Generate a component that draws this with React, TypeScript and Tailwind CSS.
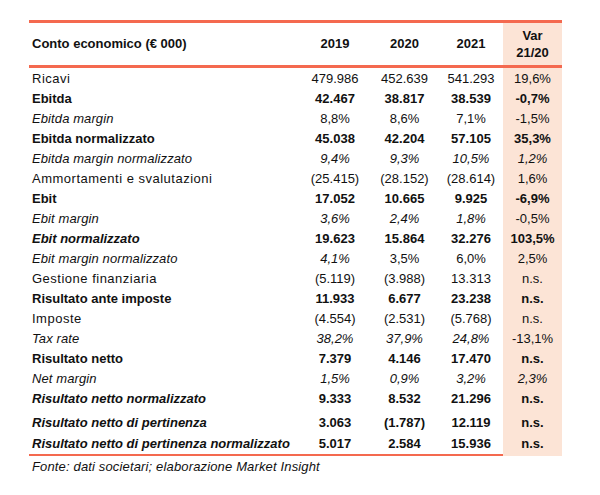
type Style = "n" | "b" | "i" | "bi";

interface Row {
  label: string;
  style: Style;
  values: [string, string, string, string];
  // which value cells are italic (for margin rows)
  italic?: [boolean, boolean, boolean, boolean];
  bold?: boolean;
  gap?: boolean;
}

const ROWS: Row[] = [
  { label: "Ricavi", style: "n", values: ["479.986", "452.639", "541.293", "19,6%"] },
  { label: "Ebitda", style: "b", values: ["42.467", "38.817", "38.539", "-0,7%"], bold: true },
  { label: "Ebitda margin", style: "i", values: ["8,8%", "8,6%", "7,1%", "-1,5%"] },
  { label: "Ebitda normalizzato", style: "b", values: ["45.038", "42.204", "57.105", "35,3%"], bold: true },
  {
    label: "Ebitda margin normalizzato",
    style: "i",
    values: ["9,4%", "9,3%", "10,5%", "1,2%"],
    italic: [true, true, true, true],
  },
  { label: "Ammortamenti e svalutazioni", style: "n", values: ["(25.415)", "(28.152)", "(28.614)", "1,6%"] },
  { label: "Ebit", style: "b", values: ["17.052", "10.665", "9.925", "-6,9%"], bold: true },
  {
    label: "Ebit margin",
    style: "i",
    values: ["3,6%", "2,4%", "1,8%", "-0,5%"],
    italic: [true, true, true, false],
  },
  { label: "Ebit normalizzato", style: "bi", values: ["19.623", "15.864", "32.276", "103,5%"], bold: true },
  {
    label: "Ebit margin normalizzato",
    style: "i",
    values: ["4,1%", "3,5%", "6,0%", "2,5%"],
    italic: [true, false, false, false],
  },
  { label: "Gestione finanziaria", style: "n", values: ["(5.119)", "(3.988)", "13.313", "n.s."] },
  { label: "Risultato ante imposte", style: "b", values: ["11.933", "6.677", "23.238", "n.s."], bold: true },
  { label: "Imposte", style: "n", values: ["(4.554)", "(2.531)", "(5.768)", "n.s."] },
  {
    label: "Tax rate",
    style: "i",
    values: ["38,2%", "37,9%", "24,8%", "-13,1%"],
    italic: [true, true, true, false],
  },
  { label: "Risultato netto", style: "b", values: ["7.379", "4.146", "17.470", "n.s."], bold: true },
  {
    label: "Net margin",
    style: "i",
    values: ["1,5%", "0,9%", "3,2%", "2,3%"],
    italic: [true, true, true, true],
  },
  {
    label: "Risultato netto normalizzato",
    style: "bi",
    values: ["9.333", "8.532", "21.296", "n.s."],
    bold: true,
  },
  {
    label: "Risultato netto di pertinenza",
    style: "bi",
    values: ["3.063", "(1.787)", "12.119", "n.s."],
    bold: true,
    gap: true,
  },
  {
    label: "Risultato netto di pertinenza normalizzato",
    style: "bi",
    values: ["5.017", "2.584", "15.936", "n.s."],
    bold: true,
  },
];

const labelClass: Record<Style, string> = {
  n: "tracking-[0.5px]",
  b: "font-bold",
  i: "italic tracking-[0.1px]",
  bi: "font-bold italic",
};

const GRID = "grid grid-cols-[271px_70px_69px_64px_59px]";

export default function App() {
  return (
    <div
      className="w-[600px] h-[495px] bg-white pt-[20px] pl-[29px] text-[#111] text-[13px]"
      style={{ fontFamily: '"Liberation Sans", Arial, sans-serif' }}
    >
      <div className="w-[533px]">
        {/* Header */}
        <div className={`${GRID} h-[48px] border-t-[3px] border-b-[3px] border-[#F4694F] font-bold`}>
          <div className="flex items-center pl-[3px]">Conto economico (€ 000)</div>
          <div className="flex items-center justify-center">2019</div>
          <div className="flex items-center justify-center">2020</div>
          <div className="flex items-center justify-center">2021</div>
          <div className="flex flex-col items-center justify-center bg-[#FCE4D6] leading-[17px]">
            <span>Var</span>
            <span>21/20</span>
          </div>
        </div>

        {/* Body */}
        <div className="border-b-[2px] border-[#F4694F]">
          <div className={`${GRID} h-[1px]`}>
            <div className="col-start-5 bg-[#FCE4D6]" />
          </div>
          {ROWS.map((row) => (
            <div key={row.label} className={`${GRID} ${row.gap ? "h-[25px]" : "h-[20px]"}`}>
              <div className={`flex items-end pb-[2px] pl-[3px] whitespace-nowrap ${labelClass[row.style]}`}>
                {row.label}
              </div>
              {row.values.map((v, i) => (
                <div
                  key={i}
                  className={`flex items-end justify-center pb-[2px] ${row.bold ? "font-bold" : ""} ${
                    row.italic && row.italic[i] ? "italic" : ""
                  } ${i === 3 ? "bg-[#FCE4D6]" : ""}`}
                >
                  {v}
                </div>
              ))}
            </div>
          ))}
        </div>

        <div className="pt-[3px] pl-[3px] italic leading-[16px] tracking-[0.15px]">
          Fonte: dati societari; elaborazione Market Insight
        </div>
      </div>
    </div>
  );
}
